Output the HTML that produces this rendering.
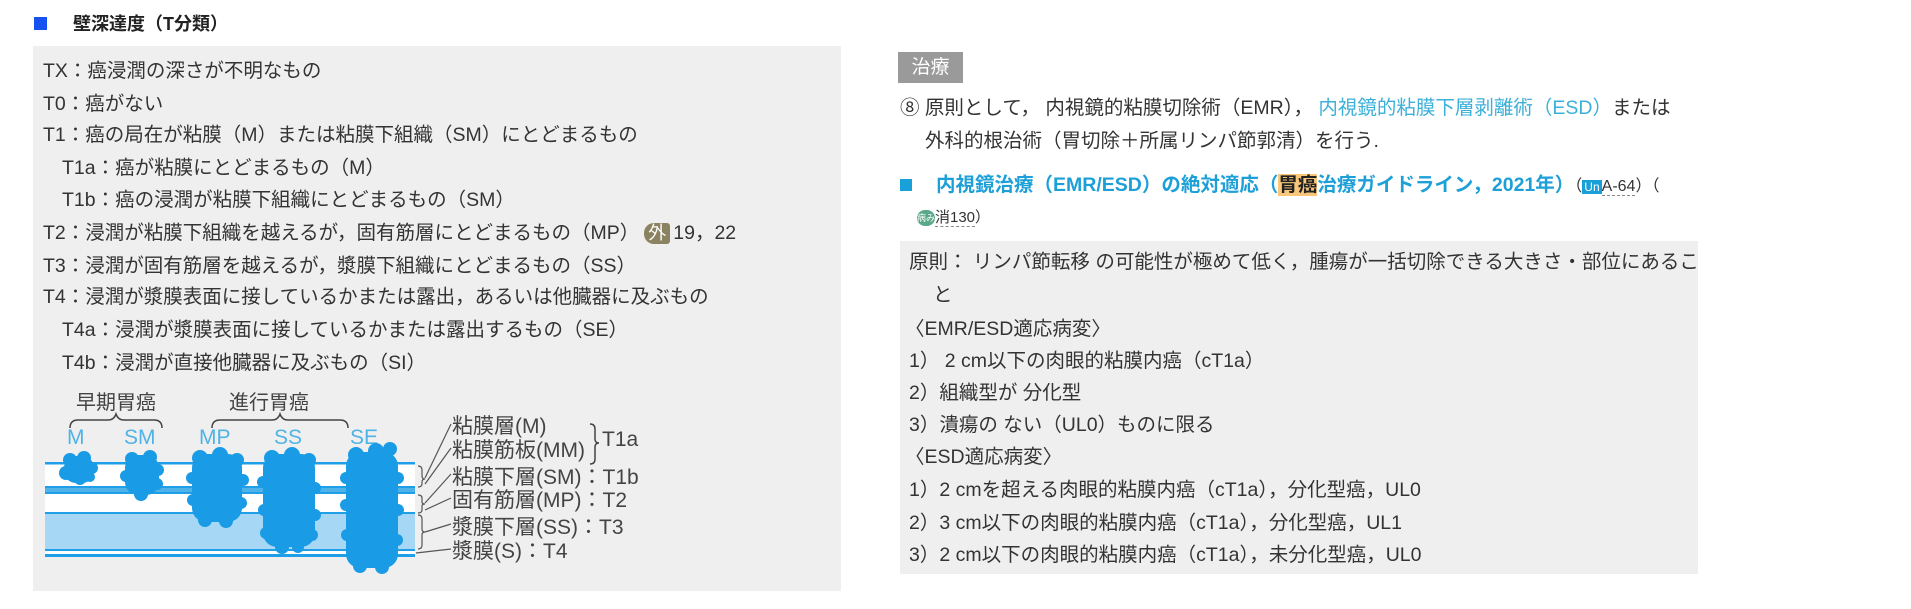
<!DOCTYPE html>
<html><head><meta charset="utf-8"><style>
body{margin:0;width:1911px;height:609px;background:#fff;position:relative;overflow:hidden;font-family:"Liberation Sans","Noto Sans CJK JP",sans-serif;color:#333;}
.a{position:absolute;white-space:nowrap;font-size:19.5px;line-height:24px;}
.box{position:absolute;background:#efefef;}
.bl{color:#1da0d8;}
.lb{position:absolute;white-space:nowrap;font-size:21px;line-height:24px;color:#444;}
</style></head><body>
<div style="position:absolute;left:34px;top:17px;width:13px;height:13px;background:#1552f0"></div>
<div class="a" style="left:73px;top:12px;font-weight:bold;font-size:18px;color:#222">壁深達度（T分類）</div>
<div class="box" style="left:33px;top:46px;width:808px;height:545px"></div>
<div class="a" style="left:43px;top:59px">TX：癌浸潤の深さが不明なもの</div>
<div class="a" style="left:43px;top:92px">T0：癌がない</div>
<div class="a" style="left:43px;top:123px">T1：癌の局在が粘膜（M）または粘膜下組織（SM）にとどまるもの</div>
<div class="a" style="left:62px;top:156px">T1a：癌が粘膜にとどまるもの（M）</div>
<div class="a" style="left:62px;top:188px">T1b：癌の浸潤が粘膜下組織にとどまるもの（SM）</div>
<div class="a" style="left:43px;top:221px">T2：浸潤が粘膜下組織を越えるが，固有筋層にとどまるもの（MP）<span style="display:inline-block;background:#8a8260;color:#fff;border-radius:10px 3px 3px 10px;padding:0 4px;line-height:21px;font-size:18px;margin:0 3px 0 5px">外</span>19，22</div>
<div class="a" style="left:43px;top:254px">T3：浸潤が固有筋層を越えるが，漿膜下組織にとどまるもの（SS）</div>
<div class="a" style="left:43px;top:285px">T4：浸潤が漿膜表面に接しているかまたは露出，あるいは他臓器に及ぶもの</div>
<div class="a" style="left:62px;top:318px">T4a：浸潤が漿膜表面に接しているかまたは露出するもの（SE）</div>
<div class="a" style="left:62px;top:351px">T4b：浸潤が直接他臓器に及ぶもの（SI）</div>

<div class="a" style="left:76px;top:391px;font-size:20px;color:#444">早期胃癌</div>
<div class="a" style="left:229px;top:391px;font-size:20px;color:#444">進行胃癌</div>
<div class="a" style="left:67px;top:426px;color:#4fb3e6;font-size:21px">M</div>
<div class="a" style="left:124px;top:426px;color:#4fb3e6;font-size:21px">SM</div>
<div class="a" style="left:199px;top:426px;color:#4fb3e6;font-size:21px">MP</div>
<div class="a" style="left:274px;top:426px;color:#4fb3e6;font-size:21px">SS</div>
<div class="a" style="left:350px;top:426px;color:#4fb3e6;font-size:21px">SE</div>
<svg style="position:absolute;left:0;top:0" width="841" height="591">
<g fill="none" stroke="#444" stroke-width="1.5">
<path d="M70 428 q0-8 8-8 h30 q6 0 8-6 q2 6 8 6 h30 q8 0 8 8"/>
<path d="M212 428 q0-8 8-8 h52 q6 0 8-6 q2 6 8 6 h52 q8 0 8 8"/>
</g>
<rect x="45" y="463" width="370" height="92" fill="#fff"/>
<rect x="45" y="486" width="370" height="8" fill="#4fb3ea"/>
<rect x="45" y="513" width="370" height="37" fill="#a6d8f5"/>
<g fill="#1e9fe8">
<rect x="45" y="462" width="370" height="2.5"/>
<rect x="45" y="486" width="370" height="2"/>
<rect x="45" y="492" width="370" height="2"/>
<rect x="45" y="512" width="370" height="2"/>
<rect x="45" y="549" width="370" height="2"/>
<rect x="45" y="554" width="370" height="3"/>
</g>
<g fill="#1a9be6">
<rect x="64" y="456" width="30" height="27" rx="12"/><circle cx="70" cy="460" r="7"/><circle cx="84" cy="458" r="7"/><circle cx="92" cy="468" r="6"/><circle cx="66" cy="473" r="7"/><circle cx="80" cy="479" r="6"/><circle cx="90" cy="477" r="5"/>
<rect x="125" y="455" width="34" height="40" rx="13"/><circle cx="132" cy="459" r="7"/><circle cx="150" cy="457" r="7"/><circle cx="158" cy="470" r="6"/><circle cx="126" cy="476" r="6"/><circle cx="157" cy="484" r="6"/><circle cx="141" cy="494" r="7"/>
<rect x="192" y="454" width="50" height="68" rx="14"/><circle cx="200" cy="458" r="8"/><circle cx="220" cy="455" r="8"/><circle cx="237" cy="460" r="7"/><circle cx="192" cy="478" r="6"/><circle cx="243" cy="480" r="6"/><circle cx="193" cy="500" r="6"/><circle cx="241" cy="503" r="6"/><circle cx="205" cy="520" r="7"/><circle cx="226" cy="521" r="7"/>
<rect x="263" y="454" width="52" height="93" rx="14"/><circle cx="272" cy="458" r="8"/><circle cx="292" cy="455" r="8"/><circle cx="309" cy="460" r="7"/><circle cx="263" cy="482" r="6"/><circle cx="315" cy="488" r="6"/><circle cx="264" cy="510" r="6"/><circle cx="315" cy="515" r="6"/><circle cx="266" cy="533" r="6"/><circle cx="312" cy="535" r="6"/><circle cx="282" cy="547" r="7"/><circle cx="298" cy="547" r="6"/>
<rect x="346" y="452" width="52" height="116" rx="14"/><circle cx="356" cy="455" r="8"/><circle cx="376" cy="451" r="8"/><circle cx="390" cy="449" r="7"/><circle cx="346" cy="478" r="6"/><circle cx="398" cy="478" r="6"/><circle cx="346" cy="505" r="6"/><circle cx="398" cy="510" r="6"/><circle cx="347" cy="535" r="6"/><circle cx="397" cy="540" r="6"/><circle cx="360" cy="566" r="7"/><circle cx="382" cy="567" r="7"/>
</g>
<g fill="none" stroke="#555" stroke-width="1.2">
<path d="M418 466 q4 0 4 4 v6 q0 3 3 3 q-3 0 -3 3 v2 q0 3 -4 3"/>
<path d="M418 495 q4 0 4 3 v4 q0 2 3 2 q-3 0 -3 2 v4 q0 3 -4 3"/>
<path d="M418 515 q4 0 4 4 v10 q0 3 3 3 q-3 0 -3 3 v10 q0 4 -4 4"/>
<path d="M425 478 L451 424"/><path d="M425 484 L451 448"/><path d="M425 503 L451 474"/><path d="M425 510 L451 498"/><path d="M425 532 L451 524"/><path d="M416 553 L451 549"/>
<path d="M590 424 q5 0 5 5 v10 q0 4 4 4 q-4 0 -4 4 v12 q0 5 -5 5" stroke="#444" stroke-width="1.5"/>
</g>
</svg>
<div class="lb" style="left:452px;top:415px">粘膜層(M)</div>
<div class="lb" style="left:452px;top:439px">粘膜筋板(MM)</div>
<div class="lb" style="left:602px;top:428px">T1a</div>
<div class="lb" style="left:452px;top:466px">粘膜下層(SM)：T1b</div>
<div class="lb" style="left:452px;top:489px">固有筋層(MP)：T2</div>
<div class="lb" style="left:452px;top:516px">漿膜下層(SS)：T3</div>
<div class="lb" style="left:452px;top:540px">漿膜(S)：T4</div>

<div style="position:absolute;left:898px;top:52px;width:65px;height:31px;background:#9a9a9a;color:#fff;font-size:19px;line-height:31px;text-align:center">治療</div>
<div class="a" style="left:900px;top:96px">⑧ 原則として， 内視鏡的粘膜切除術（EMR）， <span style="color:#3cb0d8">内視鏡的粘膜下層剥離術（ESD）</span>または</div>
<div class="a" style="left:925px;top:129px">外科的根治術（胃切除＋所属リンパ節郭清）を行う.</div>
<div style="position:absolute;left:900px;top:179px;width:12px;height:12px;background:#1aa0d8"></div>
<div class="a bl" style="left:936px;top:173px;font-weight:bold">内視鏡治療（EMR/ESD）の絶対適応（<span style="background:#f8c77a;color:#222">胃癌</span>治療ガイドライン，2021年）<span style="color:#333;font-weight:normal;font-size:16px">（<span style="background:#1aa0d8;color:#fff;font-size:12px;padding:0 2px">Un</span><span style="border-bottom:1px dashed #888">A-64</span>）（</span></div>
<div class="a" style="left:917px;top:206px;font-size:15px"><span style="display:inline-block;width:18px;height:16px;border-radius:8px;background:#5aa88a;color:#fff;font-size:9px;line-height:16px;text-align:center;vertical-align:middle">病み</span><span style="border-bottom:1px dashed #888">消130</span>）</div>
<div class="box" style="left:900px;top:241px;width:798px;height:333px"></div>
<div class="a" style="left:909px;top:250px">原則： リンパ節転移 の可能性が極めて低く，腫瘍が一括切除できる大きさ・部位にあるこ</div>
<div class="a" style="left:933px;top:283px">と</div>
<div class="a" style="left:905px;top:317px">〈EMR/ESD適応病変〉</div>
<div class="a" style="left:909px;top:349px">1） 2 cm以下の肉眼的粘膜内癌（cT1a）</div>
<div class="a" style="left:909px;top:381px">2）組織型が 分化型</div>
<div class="a" style="left:909px;top:413px">3）潰瘍の ない（UL0）ものに限る</div>
<div class="a" style="left:905px;top:445px">〈ESD適応病変〉</div>
<div class="a" style="left:909px;top:478px">1）2 cmを超える肉眼的粘膜内癌（cT1a），分化型癌，UL0</div>
<div class="a" style="left:909px;top:511px">2）3 cm以下の肉眼的粘膜内癌（cT1a），分化型癌，UL1</div>
<div class="a" style="left:909px;top:543px">3）2 cm以下の肉眼的粘膜内癌（cT1a），未分化型癌，UL0</div>
</body></html>
